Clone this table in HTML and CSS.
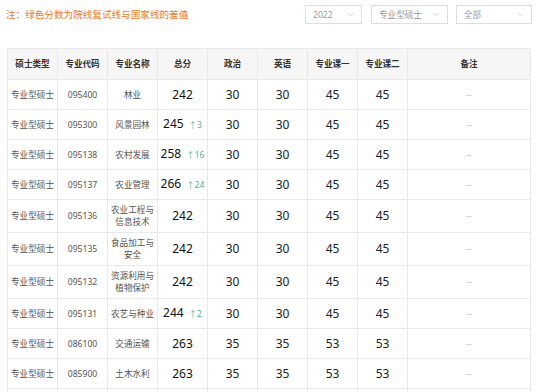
FILE: index.html
```html
<!DOCTYPE html>
<html lang="zh">
<head>
<meta charset="utf-8">
<link rel="stylesheet" href="styles.css">
</head>
<body>
<div class="page">
  <div class="topbar">
    <div class="note">注：绿色分数为院线复试线与国家线的差值</div>
    <div class="filters">
      <div class="select s1"><span>2022</span><svg class="chev" viewBox="0 0 10 6"><path d="M1 1 L5 5 L9 1" /></svg></div>
      <div class="select s2"><span>专业型硕士</span><svg class="chev" viewBox="0 0 10 6"><path d="M1 1 L5 5 L9 1" /></svg></div>
      <div class="select s3"><span>全部</span><svg class="chev" viewBox="0 0 10 6"><path d="M1 1 L5 5 L9 1" /></svg></div>
    </div>
  </div>
  <table class="score">
    <colgroup>
      <col class="c"><col class="c"><col class="c"><col class="c"><col class="c"><col class="c"><col class="c"><col class="c"><col class="cl">
    </colgroup>
    <thead>
      <tr><th>硕士类型</th><th>专业代码</th><th>专业名称</th><th>总分</th><th>政治</th><th>英语</th><th>专业课一</th><th>专业课二</th><th>备注</th></tr>
    </thead>
    <tbody>
      <tr><td>专业型硕士</td><td>095400</td><td>林业</td><td class="num"><span class="tot">242</span></td><td class="num">30</td><td class="num">30</td><td class="num">45</td><td class="num">45</td><td class="rm">--</td></tr>
      <tr><td>专业型硕士</td><td>095300</td><td>风景园林</td><td class="num"><span class="tot">245</span><span class="up">↑3</span></td><td class="num">30</td><td class="num">30</td><td class="num">45</td><td class="num">45</td><td class="rm">--</td></tr>
      <tr><td>专业型硕士</td><td>095138</td><td>农村发展</td><td class="num"><span class="tot">258</span><span class="up">↑16</span></td><td class="num">30</td><td class="num">30</td><td class="num">45</td><td class="num">45</td><td class="rm">--</td></tr>
      <tr><td>专业型硕士</td><td>095137</td><td>农业管理</td><td class="num"><span class="tot">266</span><span class="up">↑24</span></td><td class="num">30</td><td class="num">30</td><td class="num">45</td><td class="num">45</td><td class="rm">--</td></tr>
      <tr class="two"><td>专业型硕士</td><td>095136</td><td>农业工程与<br>信息技术</td><td class="num"><span class="tot">242</span></td><td class="num">30</td><td class="num">30</td><td class="num">45</td><td class="num">45</td><td class="rm">--</td></tr>
      <tr class="two"><td>专业型硕士</td><td>095135</td><td>食品加工与<br>安全</td><td class="num"><span class="tot">242</span></td><td class="num">30</td><td class="num">30</td><td class="num">45</td><td class="num">45</td><td class="rm">--</td></tr>
      <tr class="two"><td>专业型硕士</td><td>095132</td><td>资源利用与<br>植物保护</td><td class="num"><span class="tot">242</span></td><td class="num">30</td><td class="num">30</td><td class="num">45</td><td class="num">45</td><td class="rm">--</td></tr>
      <tr><td>专业型硕士</td><td>095131</td><td>农艺与种业</td><td class="num"><span class="tot">244</span><span class="up">↑2</span></td><td class="num">30</td><td class="num">30</td><td class="num">45</td><td class="num">45</td><td class="rm">--</td></tr>
      <tr><td>专业型硕士</td><td>086100</td><td>交通运输</td><td class="num"><span class="tot">263</span></td><td class="num">35</td><td class="num">35</td><td class="num">53</td><td class="num">53</td><td class="rm">--</td></tr>
      <tr><td>专业型硕士</td><td>085900</td><td>土木水利</td><td class="num"><span class="tot">263</span></td><td class="num">35</td><td class="num">35</td><td class="num">53</td><td class="num">53</td><td class="rm">--</td></tr>
      <tr><td></td><td></td><td></td><td></td><td></td><td></td><td></td><td></td><td></td></tr>
    </tbody>
  </table>
</div>
</body>
</html>
```
FILE: styles.css
```css
html, body {
  margin: 0;
  padding: 0;
  background: #fff;
}
body {
  font-family: "Noto Sans", "Noto Sans CJK SC", sans-serif;
  color: #555;
}
.page {
  padding: 0 5px 0 7px;
}
.topbar {
  display: flex;
  justify-content: space-between;
  align-items: flex-start;
  height: 48px;
}
.note {
  margin-top: 8px;
  margin-left: -1px;
  font-size: 9.6px;
  line-height: 13px;
  color: #f5782a;
}
.filters {
  display: flex;
  margin-top: 5px;
}
.select {
  box-sizing: border-box;
  height: 19px;
  border: 1px solid #dedede;
  display: flex;
  align-items: center;
  justify-content: space-between;
  padding: 0 7px 0 7px;
  font-size: 8.6px;
  color: #999;
}
.s1 { width: 57px; margin-left: 0; }
.s2 { width: 77px; margin-left: 9px; }
.s3 { width: 76px; margin-left: 8px; }
.chev {
  width: 7px;
  height: 5px;
  fill: none;
  stroke: #c4c4c4;
  stroke-width: 1;
}
table.score {
  border-collapse: collapse;
  table-layout: fixed;
  width: 523px;
}
col.c { width: 50px; }
col.cl { width: 123px; }
th, td {
  border: 1px solid #e9e9e9;
  text-align: center;
  vertical-align: middle;
  padding: 0;
  font-size: 8.6px;
  line-height: 12px;
  white-space: nowrap;
}
thead tr { height: 31px; }
th {
  background: #f6f6f6;
  color: #333;
  font-weight: bold;
}
tbody tr { height: 30px; }
tbody tr.two { height: 33px; }
td { color: #555; }
td.num {
  font-size: 12px;
  color: #222;
}
.tot { color: #111; }
.up {
  font-size: 8.5px;
  color: #4fb3a0;
  margin-left: 5px;
}
td.rm {
  color: #bbb;
  font-size: 8px;
}
```
